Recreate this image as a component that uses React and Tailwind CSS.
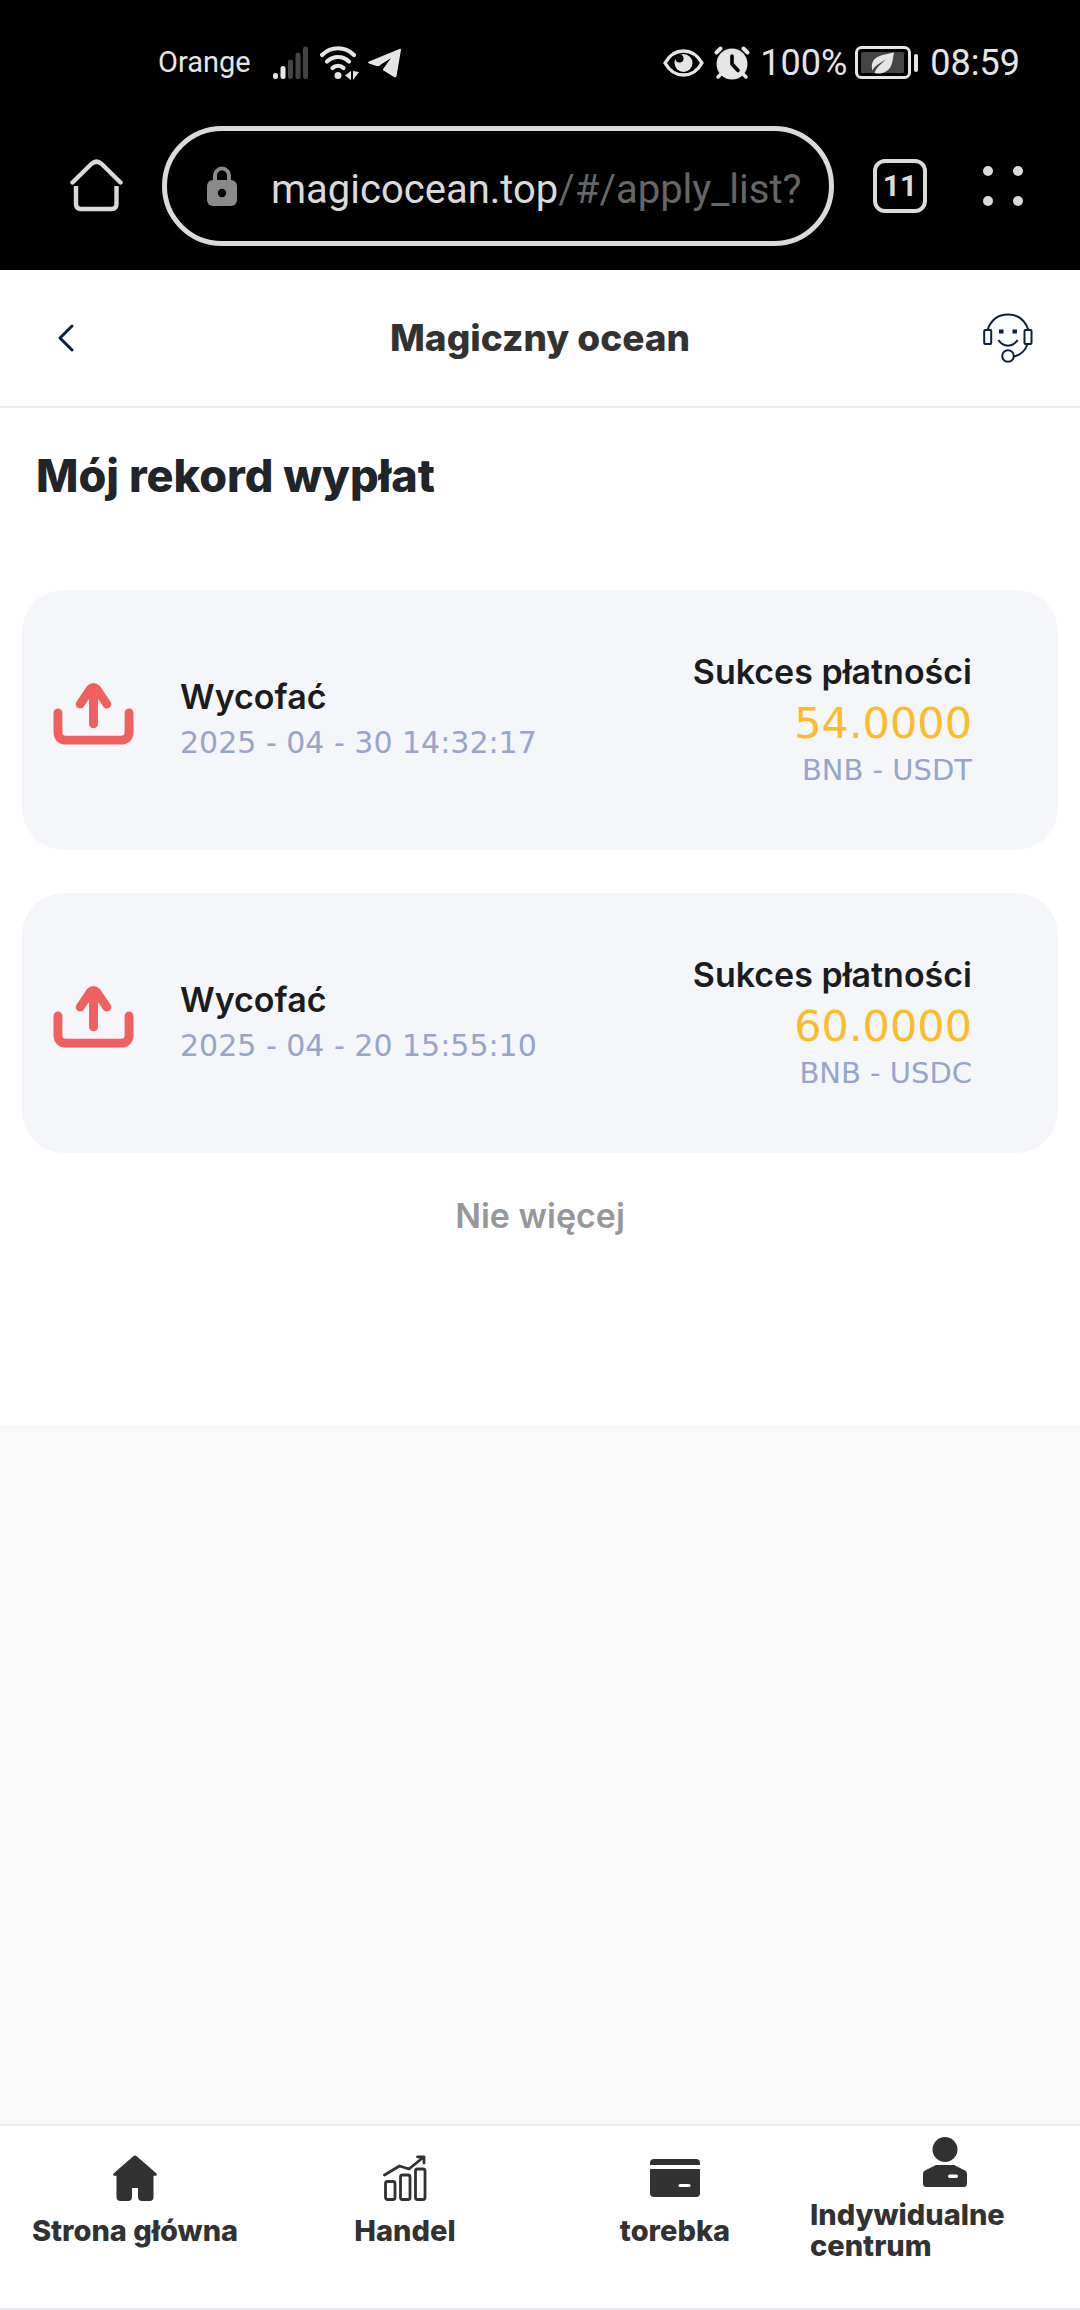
const records = [
  { id: 1, type: 'Wycofać', time: '2025 - 04 - 30 14:32:17', status: 'Sukces płatności', amount: '54.0000', coin: 'BNB - USDT' },
  { id: 2, type: 'Wycofać', time: '2025 - 04 - 20 15:55:10', status: 'Sukces płatności', amount: '60.0000', coin: 'BNB - USDC' },
];

function SignalIcon() {
  return (
    <svg width="36" height="34" viewBox="0 0 36 34" strokeWidth="5" strokeLinecap="round">
      <path d="M2.500 29.500V30.500M10 22.500V30.500" stroke="#e5e5e5" />
      <path d="M17.500 16V30.500M25 9V30.500M32.500 3V30.500" stroke="#444" />
    </svg>
  );
}

function WifiIcon() {
  return (
    <svg width="41" height="34" viewBox="0 0 41 34" fill="none" stroke="#e5e5e5">
      <path d="M3 9C12 0 26 0 35 9M8 15.500C14.500 9.500 23.500 9.500 30 15.500M13.500 22C16.500 19 21.500 19 24.500 22" strokeWidth="4.200" strokeLinecap="round" />
      <circle cx="19" cy="29.500" r="3.500" fill="#e5e5e5" stroke="none" />
      <path d="M32 25v9l-6-4.500zM34 25v9l6-8z" fill="#e5e5e5" stroke="none" />
    </svg>
  );
}

function TelegramIcon() {
  return (
    <svg width="33" height="30" viewBox="0 0 33 30" fill="#e5e5e5">
      <path d="M31.500 1C32.500 .6 33 1 33 2L28.500 28C28.200 29.500 27 29.700 26 29L15.500 22.500C14.800 22 14.800 21.500 15.300 20.800L23 10L11.500 17.500C10.500 18.200 9.500 18.300 8.500 18L1 15.500C-.2 15 -.2 14 1 13.500Z" />
    </svg>
  );
}

function EyeIcon() {
  return (
    <svg width="41" height="28" viewBox="0 0 41 28">
      <path d="M2 14C11 -2 30 -2 39 14C30 30 11 30 2 14Z" fill="none" stroke="#e5e5e5" strokeWidth="3.400" strokeLinejoin="round" />
      <circle cx="20.500" cy="14" r="9" fill="#e5e5e5" />
      <circle cx="16.500" cy="9.500" r="4" fill="#000" />
    </svg>
  );
}

function AlarmIcon() {
  return (
    <svg width="36" height="34" viewBox="0 0 36 34" fill="none" strokeLinecap="round">
      <circle cx="18" cy="18" r="15.500" fill="#e5e5e5" />
      <path d="M2.500 6.500L6.500 2.500M33.500 6.500L29.500 2.500" stroke="#e5e5e5" strokeWidth="4" />
      <path d="M7 28L4 31M29 28L32 31" stroke="#e5e5e5" strokeWidth="3.500" />
      <path d="M18 10V18L24 24.500" stroke="#000" strokeWidth="3.600" />
    </svg>
  );
}

function BatteryIcon() {
  return (
    <svg width="63" height="34" viewBox="0 0 63 34">
      <rect x="1.500" y="1.500" width="53" height="30" rx="5" fill="none" stroke="#e5e5e5" strokeWidth="3" />
      <rect x="6" y="6" width="43" height="21" rx="1.500" fill="#444" />
      <rect x="59" y="8" width="4" height="18" rx="2" fill="#e5e5e5" />
      <path d="M39 6.500C30 9 19 9 17 18C16.500 21 17 23 17.500 24.500C20 19 26 17 31 13C27 18 22 20 19.500 27C26 29 33 26 36 20C38 15 38 11 39 6.500Z" fill="#e5e5e5" />
    </svg>
  );
}

function BrowserHomeIcon() {
  return (
    <svg width="54" height="54" viewBox="0 0 54 54" fill="none" stroke="#dadada" strokeWidth="4.400">
      <path d="M2.500 23.500L21.500 4.800Q26.500 .4 31.500 4.800L50.500 23.500" strokeLinecap="round" />
      <path d="M6 27V45Q6 50 11 50H41.500Q46.500 50 46.500 45V27" />
    </svg>
  );
}

function LockIcon() {
  return (
    <svg width="30" height="40" viewBox="0 0 30 40" className="shrink-0">
      <path d="M8 15V9.500a7 7 0 0 1 14 0V15" fill="none" stroke="#8a8a8a" strokeWidth="4" />
      <rect y="14" width="30" height="26" rx="6" fill="#8a8a8a" />
      <circle cx="15" cy="27" r="4.200" fill="#000" />
    </svg>
  );
}

function DotsIcon() {
  return (
    <svg width="40" height="40" viewBox="0 0 40 40" fill="#dadada">
      <circle cx="5" cy="5" r="5" />
      <circle cx="35" cy="5" r="5" />
      <circle cx="5" cy="35" r="5" />
      <circle cx="35" cy="35" r="5" />
    </svg>
  );
}

function BackIcon() {
  return (
    <svg width="16" height="28" viewBox="0 0 16 28" fill="none" stroke="#0d213f" strokeWidth="3" strokeLinecap="round" strokeLinejoin="round">
      <path d="M14 2L2 14L14 26" />
    </svg>
  );
}

function SupportIcon() {
  return (
    <svg width="50" height="50" viewBox="0 0 50 50" fill="none" stroke="#0d213f" strokeWidth="2">
      <path d="M4.500 17C8 7 15.500 1.500 25 1.500S42 7 45.500 17" />
      <rect x="1.200" y="17" width="7" height="14" rx="1" />
      <rect x="41.500" y="17" width="7" height="14" rx="1" />
      <path d="M44.500 31C42 38.500 38 42 31 43.500" />
      <path d="M15.500 27C20 34.500 30 34.500 34.500 27" />
      <circle cx="25" cy="43" r="5.800" />
      <path d="M16 16.500h4.500v4H16zM29.500 16.500H34v4h-4.500z" fill="#0d213f" stroke="none" />
    </svg>
  );
}

function WithdrawIcon() {
  return (
    <svg width="81" height="64" viewBox="0 0 82 64" fill="none" stroke="#f16060" strokeWidth="9" strokeLinecap="round" strokeLinejoin="round">
      <path d="M5 31V50Q5 58.500 13.500 58.500H68.500Q77 58.500 77 50V31" />
      <path d="M41 42V6M27.500 22L38 6.500Q41 3.500 44 6.500L54.500 22" />
    </svg>
  );
}

function HomeIcon() {
  return (
    <svg width="44" height="46" viewBox="0 0 44 46" fill="#323233">
      <path d="M20 1.500Q22 -.3 24 1.500L43.500 18.500Q44.500 20.800 42 20.800H40.500V42Q40.500 46 36.500 46H29Q25 46 25 42V33H19V42Q19 46 15 46H7.500Q3.500 46 3.500 42V20.800H2Q-.5 20.800 .5 18.500Z" />
    </svg>
  );
}

function TradeIcon() {
  return (
    <svg width="44" height="46" viewBox="0 0 44 46" fill="none" stroke="#323233" strokeWidth="2.800" strokeLinecap="round" strokeLinejoin="round">
      <rect x="2.500" y="26.500" width="9.500" height="18" rx="2" />
      <rect x="17.500" y="20" width="9.500" height="24.500" rx="2" />
      <rect x="32.500" y="14" width="9.500" height="30.500" rx="2" />
      <path d="M1.500 20L16.500 11L26 14L40 2.500M34.500 1.800H41V8" />
    </svg>
  );
}

function WalletIcon() {
  return (
    <svg width="50" height="38" viewBox="0 0 50 38" fill="#323233">
      <path d="M4 0H46Q50 0 50 4V6H0V4Q0 0 4 0Z" />
      <path d="M0 10H50V34Q50 38 46 38H4Q0 38 0 34Z" />
      <rect x="28.500" y="25" width="12" height="3" rx="1.500" fill="#fff" />
    </svg>
  );
}

function ProfileIcon() {
  return (
    <svg width="44" height="50" viewBox="0 0 44 50" fill="#323233">
      <circle cx="22" cy="12.500" r="12.500" />
      <path d="M13 28H31L42 33.500Q44 34.500 44 36.500V46.500Q44 50 40.500 50H3.500Q0 50 0 46.500V36.500Q0 34.500 2 33.500Z" />
      <rect x="25" y="37.500" width="10" height="3.500" rx="1.700" fill="#fff" />
    </svg>
  );
}

const tabs = [
  { label: 'Strona główna', Icon: HomeIcon },
  { label: 'Handel', Icon: TradeIcon },
  { label: 'torebka', Icon: WalletIcon },
  { label: 'Indywidualne centrum', Icon: ProfileIcon },
];

function RecordCard({ record }) {
  return (
    <li className="flex items-center rounded-[42px] bg-[#f4f6fa] pt-[58px] pr-[86px] pb-[60px] pl-[31px]">
      <span className="mb-2.5"><WithdrawIcon /></span>
      <div className="ml-[46px] flex-1">
        <p className="text-[34px] leading-[48px] font-semibold text-[#1c1c1e]">{record.type}</p>
        <p className="font-['DejaVu_Sans',sans-serif] text-[30px] leading-[44px] text-[#97a5c9]">{record.time}</p>
      </div>
      <div className="text-right">
        <p className="text-[34px] leading-[48px] font-semibold text-[#1c1c1e]">{record.status}</p>
        <p className="font-['DejaVu_Sans',sans-serif] text-[43px] leading-[54px] text-[#fbbc29]">{record.amount}</p>
        <p className="font-['DejaVu_Sans',sans-serif] text-[29px] leading-[40px] text-[#97a5c9]">{record.coin}</p>
      </div>
    </li>
  );
}

export default function App() {
  return (
    <div className="flex min-h-screen flex-col bg-[#f8f8f8] font-['Inter',sans-serif]">
      {/* Phone status bar and browser toolbar */}
      <header className="bg-black font-['Roboto',sans-serif] text-[#e5e5e5]">
        <div className="flex h-[126px] items-center justify-between pr-[60px] pl-[158px]">
          <div className="flex items-center">
            <span className="mr-[22px] text-[29px]">Orange</span>
            <SignalIcon />
            <span className="mr-2 ml-2.5"><WifiIcon /></span>
            <TelegramIcon />
          </div>
          <div className="flex items-center">
            <EyeIcon />
            <span className="mr-2.5 ml-2.5"><AlarmIcon /></span>
            <span className="mr-2 text-[36px]">100%</span>
            <BatteryIcon />
            <span className="ml-3 text-[36px]">08:59</span>
          </div>
        </div>
        <div className="flex items-center pr-[57px] pb-6 pl-[70px]">
          <button type="button" aria-label="Home"><BrowserHomeIcon /></button>
          <button type="button" className="mr-[39px] ml-[38px] flex h-[120px] min-w-0 flex-1 items-center rounded-full border-[5px] border-[#dadada] pr-3 pl-10">
            <LockIcon />
            <span className="ml-[34px] pt-2 text-[40px] whitespace-nowrap text-[#dadada]">
              magicocean.top<span className="text-[#666]">/#/apply_list?</span>
            </span>
          </button>
          <button type="button" className="mr-14 h-[54px] w-[54px] rounded-xl border-4 border-[#dadada] text-[30px] leading-[46px] font-bold text-[#dadada]">11</button>
          <button type="button" aria-label="Menu"><DotsIcon /></button>
        </div>
      </header>

      {/* Page content */}
      <main className="bg-white pb-[185px]">
        <div className="grid h-[138px] grid-cols-[1fr_auto_1fr] items-center border-b-2 border-[#ededed] px-[47px]">
          <button type="button" aria-label="Wstecz" className="justify-self-start pl-[11px]"><BackIcon /></button>
          <h1 className="text-[37px] font-extrabold text-[#323233]">Magiczny ocean</h1>
          <button type="button" aria-label="Pomoc" className="justify-self-end"><SupportIcon /></button>
        </div>
        <h2 className="px-9 pt-[38px] text-[45px] leading-[60px] font-extrabold text-[#212529]">Mój rekord wypłat</h2>
        <ul className="mt-[84px] space-y-[43px] px-[22px]">
          {records.map((record) => (
            <RecordCard key={record.id} record={record} />
          ))}
        </ul>
        <p className="mt-[39px] text-center text-[34px] leading-[48px] font-semibold text-[#969799]">Nie więcej</p>
      </main>

      {/* Bottom tabs */}
      <nav className="mt-auto grid h-[186px] grid-cols-4 border-y-2 border-[#ebedf0] bg-white text-[29px] leading-[31px] font-extrabold text-[#323233]">
        {tabs.map(({ label, Icon }) => (
          <a key={label} href="#" className="flex flex-col items-center justify-center gap-3 pb-9">
            <span className="flex h-[50px] items-center"><Icon /></span>
            <span>{label}</span>
          </a>
        ))}
      </nav>
    </div>
  );
}
